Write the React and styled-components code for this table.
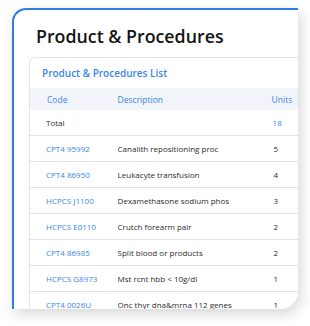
import React from "react";
import styled, { createGlobalStyle } from "styled-components";

const Global = createGlobalStyle`
  html, body { margin: 0; padding: 0; background: #ffffff; }
  body { font-family: "Open Sans", "Noto Sans", sans-serif; }
`;

const Page = styled.div`
  padding: 8px 12px 0 12px;
  width: 310px;
  height: 326px;
  box-sizing: border-box;
  overflow: hidden;
`;

const Frame = styled.div`
  width: 286px;
  height: 301px;
  box-sizing: border-box;
  border-top: 2px solid #2f7de3;
  border-left: 2px solid #2f7de3;
  border-radius: 14px 0 18px 0;
  background: #fff;
  box-shadow: 3px 5px 14px rgba(0, 0, 0, 0.16);
  overflow: hidden;
  padding: 14px 0 0 15px;
`;

const Title = styled.h1`
  margin: 0 0 9px 7px;
  font-size: 17.8px;
  font-weight: 600;
  color: #141414;
  line-height: 24px;
  white-space: nowrap;
`;

const Panel = styled.div`
  width: 300px;
  border: 1px solid #e4e4e4;
  border-radius: 6px 0 0 0;
  background: #fff;
`;

const PanelTitle = styled.div`
  height: 30px;
  display: flex;
  align-items: center;
  padding-left: 12px;
  font-size: 10px;
  font-weight: 600;
  color: #3a86e8;
`;

const Table = styled.table`
  border-collapse: collapse;
  width: 100%;
  table-layout: fixed;
`;

const HeadCell = styled.th`
  box-sizing: border-box;
  background: #f1f4f8;
  height: 22px;
  padding: 0 0 0 ${(p) => p.$pl || 0}px;
  text-align: left;
  font-size: 8.5px;
  font-weight: 500;
  color: #3a86e8;
  width: ${(p) => p.$w}px;
`;

const Row = styled.tr`
  border-bottom: 1px solid #e3e3e3;
`;

const Cell = styled.td`
  box-sizing: border-box;
  height: ${(p) => p.$h || 26}px;
  padding: 0 0 0 ${(p) => p.$pl || 0}px;
  font-size: 8px;
  color: ${(p) => (p.$blue ? "#3a86e8" : "#2b2b2b")};
  white-space: nowrap;
  overflow: hidden;
`;

const rows = [
  ["CPT4 95992", "Canalith repositioning proc", "5"],
  ["CPT4 86950", "Leukacyte transfusion", "4"],
  ["HCPCS  J1100", "Dexamethasone sodium phos", "3"],
  ["HCPCS E0110", "Crutch forearm pair", "2"],
  ["CPT4 86985", "Split blood or products", "2"],
  ["HCPCS G8973", "Mst rcnt hbb < 10g/dl", "1"],
  ["CPT4 0026U", "Onc thyr dna&mrna 112 genes", "1"],
];

export default function App() {
  return (
    <>
      <Global />
      <Page>
        <Frame>
          <Title>Product &amp; Procedures</Title>
          <Panel>
            <PanelTitle>Product &amp; Procedures List</PanelTitle>
            <Table>
              <thead>
                <tr>
                  <HeadCell $w={87} $pl={17}>Code</HeadCell>
                  <HeadCell $w={153}>Description</HeadCell>
                  <HeadCell $w={58}>Units</HeadCell>
                </tr>
              </thead>
              <tbody>
                <Row>
                  <Cell $pl={16} $h={25}>Total</Cell>
                  <Cell $h={25} />
                  <Cell $blue $pl={1} $h={25}>18</Cell>
                </Row>
                {rows.map((r) => (
                  <Row key={r[0]}>
                    <Cell $blue $pl={16}>{r[0]}</Cell>
                    <Cell>{r[1]}</Cell>
                    <Cell $pl={2}>{r[2]}</Cell>
                  </Row>
                ))}
              </tbody>
            </Table>
          </Panel>
        </Frame>
      </Page>
    </>
  );
}
